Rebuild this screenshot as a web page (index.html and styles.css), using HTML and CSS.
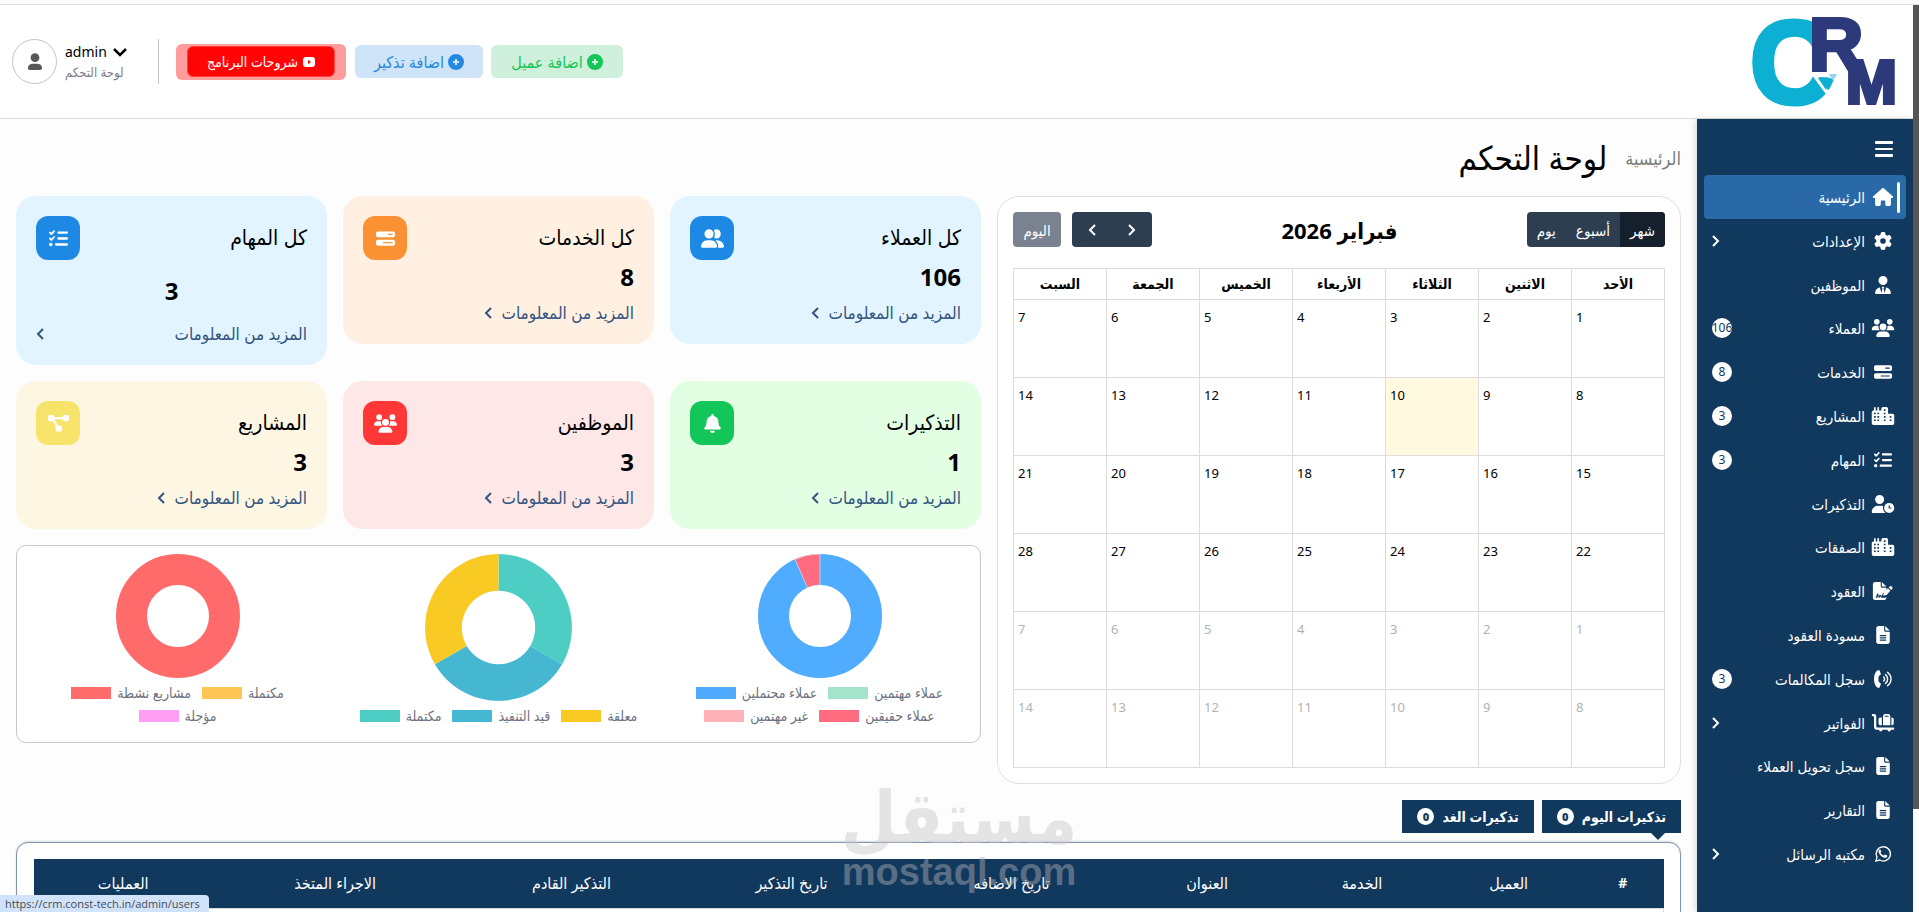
FILE: index.html
```html
<!DOCTYPE html>
<html lang="ar" dir="rtl">
<head>
<meta charset="utf-8">
<title>لوحة التحكم</title>
<link rel="stylesheet" href="styles.css">
</head>
<body>
<svg class="sprite" aria-hidden="true">
  <symbol id="house" viewBox="0 0 576 512"><path d="M575.8 255.5c0 18-15 32.1-32 32.1l-32 0 .7 160.2c0 2.7-.2 5.4-.5 8.1l0 16.2c0 22.1-17.9 40-40 40l-16 0-40 0-24 0c-22.1 0-40-17.9-40-40l0-88c0-17.700-14.300-32-32-32l-64 0c-17.700 0-32 14.300-32 32l0 88c0 22.100-17.900 40-40 40l-80 0c-22.100 0-40-17.900-40-40l0-184.500-32 0c-18 0-32-14-32-32.100c0-9 3-17 10-24L266.400 8c7-7 15-8 22-8s15 2 21 7L564.800 231.500c8 7 12 15 11 24z"/></symbol>
  <symbol id="gear" viewBox="0 0 512 512"><path d="M495.9 166.6c3.2 8.7 .5 18.4-6.4 24.6l-43.3 39.4c1.1 8.3 1.7 16.8 1.7 25.4s-.6 17.1-1.7 25.4l43.3 39.4c6.9 6.2 9.6 15.9 6.4 24.6c-4.4 11.9-9.7 23.3-15.8 34.3l-4.7 8.1c-6.6 11-14 21.4-22.1 31.2c-5.9 7.2-15.7 9.6-24.5 6.8l-55.7-17.7c-13.4 10.3-28.2 18.9-44 25.4l-12.5 57.1c-2 9.1-9 16.3-18.2 17.8c-13.8 2.3-28 3.5-42.5 3.5s-28.7-1.2-42.5-3.5c-9.2-1.5-16.2-8.7-18.2-17.8l-12.5-57.1c-15.8-6.5-30.6-15.1-44-25.4L83.1 425.9c-8.8 2.8-18.6 .3-24.5-6.8c-8.1-9.8-15.5-20.2-22.1-31.2l-4.7-8.1c-6.1-11-11.4-22.4-15.8-34.3c-3.2-8.7-.5-18.4 6.4-24.6l43.3-39.4C64.6 273.1 64 264.6 64 256s.6-17.1 1.7-25.4L22.400 191.2c-6.900-6.200-9.600-15.900-6.400-24.600c4.400-11.900 9.700-23.300 15.800-34.300l4.700-8.100c6.600-11 14-21.400 22.100-31.200c5.900-7.200 15.700-9.600 24.500-6.800l55.700 17.700c13.400-10.300 28.200-18.900 44-25.400l12.500-57.100c2-9.100 9-16.300 18.200-17.800C227.300 1.200 241.500 0 256 0s28.700 1.200 42.500 3.500c9.200 1.500 16.200 8.700 18.200 17.800l12.500 57.100c15.800 6.500 30.600 15.100 44 25.400l55.700-17.700c8.800-2.800 18.600-.3 24.500 6.800c8.100 9.800 15.500 20.200 22.100 31.200l4.700 8.100c6.100 11 11.400 22.400 15.800 34.300zM256 336a80 80 0 1 0 0-160 80 80 0 1 0 0 160z"/></symbol>
  <symbol id="user-tie" viewBox="0 0 448 512"><path d="M96 128a128 128 0 1 0 256 0A128 128 0 1 0 96 128zm94.500 200.200l18.600 31L175.800 483.100l-36-146.900c-2-8.100-9.800-13.400-17.900-11.300C51.900 342.400 0 405.800 0 481.300c0 17 13.800 30.700 30.700 30.700l386.600 0c17 0 30.700-13.800 30.700-30.700c0-75.500-51.900-138.900-121.900-156.400c-8.100-2-15.900 3.300-17.900 11.300l-36 146.900L238.900 359.200l18.600-31c6.400-10.700-1.300-24.200-13.700-24.200l-39.500 0c-12.400 0-20.100 13.600-13.700 24.200z"/></symbol>
  <symbol id="users" viewBox="0 0 640 512"><path d="M144 0a80 80 0 1 1 0 160A80 80 0 1 1 144 0zM512 0a80 80 0 1 1 0 160A80 80 0 1 1 512 0zM0 298.700C0 239.800 47.800 192 106.700 192l42.700 0c15.900 0 31 3.500 44.600 9.700c-1.300 7.200-1.900 14.700-1.900 22.300c0 38.200 16.800 72.500 43.300 96L21.300 320C9.600 320 0 310.400 0 298.700zM404.600 320c26.600-23.500 43.300-57.800 43.300-96c0-7.600-.7-15-1.900-22.300c13.600-6.300 28.700-9.700 44.600-9.700l42.700 0C592.200 192 640 239.800 640 298.700c0 11.800-9.600 21.300-21.300 21.300zM224 224a96 96 0 1 1 192 0 96 96 0 1 1 -192 0zM128 485.300C128 411.700 187.700 352 261.300 352l117.300 0C452.300 352 512 411.700 512 485.300c0 14.700-11.900 26.700-26.700 26.700l-330.700 0c-14.700 0-26.700-11.900-26.700-26.700z"/></symbol>
  <symbol id="bars-progress" viewBox="0 0 512 512"><path fill-rule="evenodd" d="M48 64h416a48 48 0 0 1 48 48v64a48 48 0 0 1-48 48H48a48 48 0 0 1-48-48v-64a48 48 0 0 1 48-48zM320 128v32h128v-32zM48 288h416a48 48 0 0 1 48 48v64a48 48 0 0 1-48 48H48a48 48 0 0 1-48-48v-64a48 48 0 0 1 48-48zM192 352v32h256v-32z"/></symbol>
  <symbol id="city" viewBox="0 0 640 512"><path fill-rule="evenodd" d="M64 24a24 24 0 0 1 48 0v72h48V24a24 24 0 0 1 48 0v72h64V48a48 48 0 0 1 48-48h96a48 48 0 0 1 48 48v144h128a48 48 0 0 1 48 48v224a48 48 0 0 1-48 48H48a48 48 0 0 1-48-48V144a48 48 0 0 1 48-48h16zM64 160v48h48v-48zM160 160v48h48v-48zM64 256v48h48v-48zM160 256v48h48v-48zM64 352v48h48v-48zM160 352v48h48v-48zM344 64v48h48V64zM344 160v48h48v-48zM344 256v48h48v-48zM344 352v48h48v-48zM512 256v48h48v-48zM512 352v48h48v-48z"/></symbol>
  <symbol id="list-check" viewBox="0 0 512 512"><path d="M152.100 38.200c9.900 8.900 10.700 24 1.800 33.900l-72 80c-4.400 4.900-10.600 7.800-17.200 7.900s-12.900-2.400-17.600-7L7 113C-2.300 103.600-2.300 88.400 7 79s24.600-9.400 33.900 0l22.100 22.100 55.100-61.200c8.900-9.900 24-10.700 33.900-1.800zm0 160c9.900 8.900 10.700 24 1.800 33.900l-72 80c-4.400 4.900-10.600 7.800-17.200 7.900s-12.900-2.400-17.600-7L7 273c-9.400-9.400-9.400-24.600 0-33.900s24.600-9.400 33.900 0l22.100 22.100 55.100-61.200c8.900-9.900 24-10.700 33.900-1.800zM224 96c0-17.700 14.300-32 32-32l224 0c17.700 0 32 14.300 32 32s-14.300 32-32 32l-224 0c-17.700 0-32-14.300-32-32zm0 160c0-17.700 14.300-32 32-32l224 0c17.700 0 32 14.300 32 32s-14.300 32-32 32l-224 0c-17.700 0-32-14.300-32-32zM160 416c0-17.700 14.300-32 32-32l288 0c17.700 0 32 14.300 32 32s-14.300 32-32 32l-288 0c-17.700 0-32-14.300-32-32zM48 368a48 48 0 1 1 0 96 48 48 0 1 1 0-96z"/></symbol>
  <symbol id="user-clock" viewBox="0 0 640 512"><path fill-rule="evenodd" d="M224 0a128 128 0 1 1 0 256A128 128 0 1 1 224 0zM178.300 304l91.400 0c20.600 0 40.400 3.500 58.800 9.900C323 331 320 349.100 320 368c0 59.500 29.500 112.100 74.800 144L29.700 512C13.300 512 0 498.700 0 482.300C0 383.800 79.800 304 178.300 304zM352 368a144 144 0 1 1 288 0 144 144 0 1 1 -288 0zm144-80c-8.800 0-16 7.200-16 16l0 64c0 8.800 7.200 16 16 16l48 0c8.800 0 16-7.200 16-16s-7.200-16-16-16l-32 0 0-48c0-8.800-7.200-16-16-16z"/></symbol>
  <symbol id="file-signature" viewBox="0 0 576 512"><path fill-rule="evenodd" d="M64 0h160v128a32 32 0 0 0 32 32h128v64L286 322c-8 8-13 17-16 28l-12 50c-12-3-23-9-28-21-9-20-36-21-46-1l-12 24-18-60c-5-19-33-19-39 0l-22 74H80v34h46l22-60 14 48c5 16 26 18 33 4l16-32c20 28 42 36 72 36h62c15 0 28-5 39-14v16a64 64 0 0 1-64 64H64a64 64 0 0 1-64-64V64A64 64 0 0 1 64 0z"/><path d="M256 0v128h128zM550 143l-15-15a40 40 0 0 0-56 0l-30 30 71 71 30-30a40 40 0 0 0 0-56zM311 296l-18 72c-3 13 7 22 19 19l72-18c6-1 11-4 15-8l98-110-71-71-107 101c-4 4-7 9-8 15z"/></symbol>
  <symbol id="file-lines" viewBox="0 0 384 512"><path fill-rule="evenodd" d="M64 0C28.700 0 0 28.700 0 64L0 448c0 35.300 28.700 64 64 64l256 0c35.300 0 64-28.700 64-64l0-288-128 0c-17.700 0-32-14.300-32-32L224 0 64 0zM256 0l0 128 128 0L256 0zM112 256h160a16 16 0 0 1 0 32H112a16 16 0 0 1 0-32zM112 320h160a16 16 0 0 1 0 32H112a16 16 0 0 1 0-32zM112 384h160a16 16 0 0 1 0 32H112a16 16 0 0 1 0-32z"/></symbol>
  <symbol id="phone-volume" viewBox="0 0 512 512"><path d="M72 28 118 4c18-7 36 2 43 19l30 78c6 16 1 32-12 42l-42 31c-14 52-14 112 0 164l42 31c13 10 18 26 12 42l-30 78c-7 17-25 26-43 19l-46-24C-24 372-24 140 72 28z"/><g fill="none" stroke="currentColor" stroke-width="40" stroke-linecap="round"><path d="M276 200c32 26 32 86 0 112M328 130c80 60 80 192 0 252M385 66c132 94 132 286 0 380"/></g></symbol>
  <symbol id="cart" viewBox="0 0 640 512"><path fill-rule="evenodd" d="M0 32A32 32 0 0 1 32 0h32a64 64 0 0 1 64 64v288a32 32 0 0 0 32 32h448a32 32 0 0 1 0 64h-64a48 48 0 1 1-96 0H304a48 48 0 1 1-96 0h-48a96 96 0 0 1-96-96V64H32A32 32 0 0 1 0 32zM320 64a64 64 0 0 1 64-64h80a64 64 0 0 1 64 64v256H320V64zm48 16h112V64a16 16 0 0 0-16-16h-80a16 16 0 0 0-16 16zM192 144a48 48 0 0 1 48-48h48v224h-48a48 48 0 0 1-48-48zM560 96h16a48 48 0 0 1 48 48v128a48 48 0 0 1-48 48h-16z"/></symbol>
  <symbol id="whatsapp" viewBox="0 0 448 512"><path fill="none" stroke="currentColor" stroke-width="38" d="M21 459l31-112A203 203 0 1 1 128 428z"/><path d="M155 145c-7-14-12-14-20-14-22 0-39 24-39 54 0 51 70 147 150 172 45 14 88 0 96-30 3-13 4-25 2-28-2-5-60-34-65-31-8 6-22 28-28 32-20 2-91-44-99-78 3-9 24-25 24-36 0-4-16-33-21-41z"/></symbol>
  <symbol id="bell" viewBox="0 0 448 512"><path d="M224 0c-17.700 0-32 14.300-32 32l0 19.200C119 66 64 130.600 64 208l0 18.800c0 47-17.300 92.400-48.500 127.600l-7.400 8.300c-8.400 9.400-10.400 22.900-5.300 34.400S19.400 416 32 416l384 0c12.600 0 24-7.400 29.200-18.900s3.100-25-5.300-34.400l-7.400-8.300C401.300 319.200 384 273.900 384 226.800l0-18.800c0-77.400-55-142-128-156.800L256 32c0-17.700-14.300-32-32-32zM160 448h128a64 64 0 0 1-128 0z"/></symbol>
  <symbol id="user-group" viewBox="0 0 640 512"><path d="M96 128a128 128 0 1 1 256 0A128 128 0 1 1 96 128zM0 482C0 384 80 304 178 304h92c98 0 178 80 178 178 0 17-13 30-30 30H30c-17 0-30-13-30-30zM610 512H472c5-9 8-20 8-32 0-72-32-130-80-167 14-6 28-9 40-9 110 0 200 82 200 178 0 17-14 30-30 30zM432 256c-28 0-48-8-72-28 38-56 38-136-4-196 22-22 46-32 76-32 68 0 118 56 118 128s-50 128-118 128z"/></symbol>
  <symbol id="diagram" viewBox="0 0 576 512"><g fill="none" stroke="currentColor" stroke-width="60"><path d="M96 110h380M128 128l150 250"/></g><rect y="30" width="176" height="164" rx="50"/><rect x="400" y="30" width="176" height="164" rx="50"/><rect x="210" y="310" width="176" height="164" rx="50"/></symbol>
  <symbol id="chevron" viewBox="0 0 8 12"><path d="M7 1 2 6l5 5" fill="none" stroke="currentColor" stroke-width="2"/></symbol>
  <symbol id="plus" viewBox="0 0 16 16"><path fill-rule="evenodd" d="M8 0a8 8 0 1 1 0 16A8 8 0 0 1 8 0zM7 5v2H5v2h2v2h2V9h2V7H9V5z"/></symbol>
</svg>

<header class="topbar">
  <a class="brand" href="#" aria-label="CRM">
    <svg class="brand-art" viewBox="0 0 150 100">
      <text class="brand-c" x="1" y="91">C</text>
      <path d="M64 0h40v66l-38-1-2-2z" fill="#fff"/>
      <path d="m64 61 19 26" stroke="#fff" stroke-width="4"/>
      <path d="m69 66 12 0-4 12z" fill="#0db0d2"/>
      <path d="m80 62 8 0-4 7z" fill="#8cd6f2"/>
      <text class="brand-r" x="60" y="58">R</text>
      <text class="brand-m" x="97" y="91">M</text>
    </svg>
  </a>
  <div class="top-tools">
    <a class="pill pill-green" href="#"><svg class="pill-icon"><use href="#plus"/></svg><span>اضافة عميل</span></a>
    <a class="pill pill-blue" href="#"><svg class="pill-icon"><use href="#plus"/></svg><span>اضافة تذكير</span></a>
    <a class="pill pill-red" href="#"><span class="pill-core"><svg class="video-icon" viewBox="0 0 12 10"><rect width="12" height="10" rx="3" fill="#fff"/><path d="m5 3 3 2-3 2z" fill="#f00"/></svg><span>شروحات البرنامج</span></span></a>
    <div class="account">
      <button class="account-name" type="button"><svg class="down" viewBox="0 0 14 10"><path d="m1 2 6 6 6-6" fill="none" stroke="currentColor" stroke-width="2.500"/></svg><span>admin</span></button>
      <span class="account-role">لوحة التحكم</span>
    </div>
    <span class="avatar"><svg viewBox="0 0 16 20"><circle cx="8" cy="5" r="5"/><path d="M2 19a2 2 0 0 1-2-2c0-4 3-5 6-5h4c3 0 6 1 6 5a2 2 0 0 1-2 2z"/></svg></span>
  </div>
</header>

<div class="shell">
  <nav class="sidebar">
    <button class="menu-toggle" type="button" aria-label="القائمة"><i></i><i></i><i></i></button>
    <ul class="menu">
      <li><a class="active" href="#"><svg><use href="#house"/></svg><span>الرئيسية</span></a></li>
      <li><a href="#"><svg><use href="#gear"/></svg><span>الإعدادات</span><svg class="more"><use href="#chevron"/></svg></a></li>
      <li><a href="#"><svg><use href="#user-tie"/></svg><span>الموظفين</span></a></li>
      <li><a href="#"><svg><use href="#users"/></svg><span>العملاء</span><b class="badge">106</b></a></li>
      <li><a href="#"><svg><use href="#bars-progress"/></svg><span>الخدمات</span><b class="badge">8</b></a></li>
      <li><a href="#"><svg><use href="#city"/></svg><span>المشاريع</span><b class="badge">3</b></a></li>
      <li><a href="#"><svg><use href="#list-check"/></svg><span>المهام</span><b class="badge">3</b></a></li>
      <li><a href="#"><svg><use href="#user-clock"/></svg><span>التذكيرات</span></a></li>
      <li><a href="#"><svg><use href="#city"/></svg><span>الصفقات</span></a></li>
      <li><a href="#"><svg><use href="#file-signature"/></svg><span>العقود</span></a></li>
      <li><a href="#"><svg><use href="#file-lines"/></svg><span>مسودة العقود</span></a></li>
      <li><a href="#"><svg><use href="#phone-volume"/></svg><span>سجل المكالمات</span><b class="badge">3</b></a></li>
      <li><a href="#"><svg><use href="#cart"/></svg><span>الفواتير</span><svg class="more"><use href="#chevron"/></svg></a></li>
      <li><a href="#"><svg><use href="#file-lines"/></svg><span>سجل تحويل العملاء</span></a></li>
      <li><a href="#"><svg><use href="#file-lines"/></svg><span>التقارير</span></a></li>
      <li><a href="#"><svg><use href="#whatsapp"/></svg><span>مكتبه الرسائل</span><svg class="more"><use href="#chevron"/></svg></a></li>
    </ul>
  </nav>

  <main class="content">
    <div class="page-head"><a href="#">الرئيسية</a><h1>لوحة التحكم</h1></div>

    <div class="dash">
      <section class="calendar">
        <div class="cal-bar">
          <div class="group"><button class="on" type="button">شهر</button><button type="button">أسبوع</button><button type="button">يوم</button></div>
          <h2>فبراير 2026</h2>
          <div class="cal-nav">
            <div class="group arrows"><button type="button" aria-label="السابق"><svg class="flip"><use href="#chevron"/></svg></button><button type="button" aria-label="التالي"><svg><use href="#chevron"/></svg></button></div>
            <button class="today-btn" type="button">اليوم</button>
          </div>
        </div>
        <table class="month">
          <thead><tr><th>الأحد</th><th>الاثنين</th><th>الثلاثاء</th><th>الأربعاء</th><th>الخميس</th><th>الجمعة</th><th>السبت</th></tr></thead>
          <tbody>
            <tr><td>1</td><td>2</td><td>3</td><td>4</td><td>5</td><td>6</td><td>7</td></tr>
            <tr><td>8</td><td>9</td><td class="today">10</td><td>11</td><td>12</td><td>13</td><td>14</td></tr>
            <tr><td>15</td><td>16</td><td>17</td><td>18</td><td>19</td><td>20</td><td>21</td></tr>
            <tr><td>22</td><td>23</td><td>24</td><td>25</td><td>26</td><td>27</td><td>28</td></tr>
            <tr class="other"><td>1</td><td>2</td><td>3</td><td>4</td><td>5</td><td>6</td><td>7</td></tr>
            <tr class="other"><td>8</td><td>9</td><td>10</td><td>11</td><td>12</td><td>13</td><td>14</td></tr>
          </tbody>
        </table>
      </section>

      <div class="overview">
        <div class="cards">
          <article class="card sky"><div class="card-top"><h3>كل العملاء</h3><span class="tile blue"><svg><use href="#user-group"/></svg></span></div><strong>106</strong><a href="#">المزيد من المعلومات<svg><use href="#chevron"/></svg></a></article>
          <article class="card peach"><div class="card-top"><h3>كل الخدمات</h3><span class="tile orange"><svg><use href="#bars-progress"/></svg></span></div><strong>8</strong><a href="#">المزيد من المعلومات<svg><use href="#chevron"/></svg></a></article>
          <article class="card sky spread"><div class="card-top"><h3>كل المهام</h3><span class="tile blue"><svg><use href="#list-check"/></svg></span></div><strong>3</strong><a href="#">المزيد من المعلومات<svg><use href="#chevron"/></svg></a></article>
          <article class="card mint"><div class="card-top"><h3>التذكيرات</h3><span class="tile green"><svg><use href="#bell"/></svg></span></div><strong>1</strong><a href="#">المزيد من المعلومات<svg><use href="#chevron"/></svg></a></article>
          <article class="card rose"><div class="card-top"><h3>الموظفين</h3><span class="tile red"><svg><use href="#users"/></svg></span></div><strong>3</strong><a href="#">المزيد من المعلومات<svg><use href="#chevron"/></svg></a></article>
          <article class="card cream"><div class="card-top"><h3>المشاريع</h3><span class="tile yellow"><svg><use href="#diagram"/></svg></span></div><strong>3</strong><a href="#">المزيد من المعلومات<svg><use href="#chevron"/></svg></a></article>
        </div>

        <section class="charts">
          <figure>
            <svg class="donut" viewBox="0 0 124 124"><circle class="ring c-blue" cx="62" cy="62" r="46.500"/><path d="M62 0A62 62 0 0 0 37 5.300L49.500 33.700A31 31 0 0 1 62 31z" fill="#ff6b7f" stroke="#fff" stroke-width=".5"/></svg>
            <figcaption dir="ltr">
              <div class="keys"><span class="key"><i class="c-blue"></i>عملاء محتملين</span><span class="key"><i class="c-mint"></i>عملاء مهتمين</span></div>
              <div class="keys"><span class="key"><i class="c-pink"></i>غير مهتمين</span><span class="key"><i class="c-rose"></i>عملاء حقيقين</span></div>
            </figcaption>
          </figure>
          <figure>
            <svg class="donut large" viewBox="-74 -74 148 148"><g><path d="M0-74A74 74 0 0 1 64 37L32 18.500A37 37 0 0 0 0-37z" fill="#4ecdc4"/><path d="M64 37A74 74 0 0 1-64 37L-32 18.500A37 37 0 0 0 32 18.500z" fill="#45b7d1"/><path d="M-64 37A74 74 0 0 1 0-74V-37A37 37 0 0 0-32 18.500z" fill="#f9ca24"/></g></svg>
            <figcaption dir="ltr">
              <div class="keys"><span class="key"><i class="c-teal"></i>مكتملة</span><span class="key"><i class="c-cyan"></i>قيد التنفيذ</span><span class="key"><i class="c-yellow"></i>معلقة</span></div>
            </figcaption>
          </figure>
          <figure>
            <svg class="donut" viewBox="0 0 124 124"><circle class="ring c-red" cx="62" cy="62" r="46.500"/></svg>
            <figcaption dir="ltr">
              <div class="keys"><span class="key"><i class="c-red"></i>مشاريع نشطة</span><span class="key"><i class="c-amber"></i>مكتملة</span></div>
              <div class="keys"><span class="key"><i class="c-violet"></i>مؤجلة</span></div>
            </figcaption>
          </figure>
        </section>
      </div>
    </div>

    <div class="tabs"><button class="tab current" type="button">تذكيرات اليوم<b>0</b></button><button class="tab" type="button">تذكيرات الغد<b>0</b></button></div>
    <section class="reminders">
      <table>
        <colgroup><col class="w-num"><col class="w-s"><col class="w-s"><col class="w-m"><col class="w-xl"><col class="w-l"><col class="w-xl"><col class="w-xxl"><col class="w-op"></colgroup>
        <thead><tr><th class="num">#</th><th>العميل</th><th>الخدمة</th><th>العنوان</th><th>تاريخ الاضافه</th><th>تاريخ التذكير</th><th>التذكير القادم</th><th>الاجراء المتخذ</th><th>العمليات</th></tr></thead>
        <tbody><tr><td colspan="9"></td></tr></tbody>
      </table>
    </section>
  </main>
</div>

<div class="watermark"><span class="wm-ar">مستقل</span><span class="wm-en">mostaql.com</span></div>
<div class="link-hint" dir="ltr">https://crm.const-tech.in/admin/users</div>
<div class="scroll-thumb"></div>
</body>
</html>
```
FILE: styles.css
```css
* { box-sizing: border-box; }
body {
  margin: 0;
  height: 100vh;
  overflow: hidden;
  display: flex;
  flex-direction: column;
  background: #fdfdfd;
  color: #000;
  font-family: "Noto Sans", "DejaVu Sans Condensed", "DejaVu Sans", sans-serif;
  font-size: 15px;
  line-height: 20px;
}
a { color: inherit; text-decoration: none; }
button { font: inherit; color: inherit; border: 0; padding: 0; background: none; cursor: pointer; }
h1, h2, h3, ul, figure { margin: 0; padding: 0; font-weight: 400; }
ul { list-style: none; }
svg { fill: currentColor; flex: none; }
.sprite { display: none; }

.topbar {
  flex: none;
  height: 115px;
  margin-top: 4px;
  padding: 0 20px 0 12px;
  border-top: 1px solid #dedede;
  border-bottom: 1px solid #dedede;
  background: #fff;
  display: flex;
  align-items: center;
  justify-content: space-between;
}
.brand { display: flex; }
.brand-art { width: 150px; height: 100px; overflow: visible; }
.brand-art text { font-family: "Liberation Sans", sans-serif; font-weight: 700; direction: ltr; }
.brand-c { font-size: 116px; fill: #0db0d2; stroke: #0db0d2; stroke-width: 5px; }
.brand-r, .brand-m { fill: #2c3a7c; stroke: #2c3a7c; stroke-width: 4px; }
.brand-r { font-size: 75px; }
.brand-m { font-size: 61px; }
.top-tools { display: flex; align-items: center; }
.pill { display: flex; align-items: center; justify-content: center; gap: 4px; height: 33px; border-radius: 6px; margin-inline-end: 8px; font-size: 16px; }
.pill-icon { width: 16px; height: 16px; }
.pill-green { width: 132px; background: #cff0dd; color: #13c656; }
.pill-blue { width: 128px; background: #cfe4f9; color: #2589e0; margin-inline-end: 9px; }
.pill-red { width: 170px; height: 36px; padding: 2px 11px; background: #ff9c9c; margin-inline-end: 17px; }
.pill-core { flex: 1; height: 31px; border: 1px solid #ff4040; border-radius: 6px; background: #ff0505; color: #fff; font-size: 14px; display: flex; align-items: center; justify-content: center; gap: 5px; }
.video-icon { width: 12px; height: 10px; }
.account { width: 102px; height: 45px; padding-left: 8px; border-right: 1px solid #c4c4c4; display: flex; flex-direction: column; align-items: flex-end; justify-content: center; }
.account-name { display: flex; align-items: center; gap: 6px; font-size: 14px; }
.down { width: 14px; height: 10px; }
.account-role { color: #7b8087; font-size: 13px; line-height: 20px; }
.avatar { width: 45px; height: 45px; border: 1px solid #c4c4c4; border-radius: 50%; display: flex; align-items: center; justify-content: center; color: #585858; }
.avatar svg { width: 14px; height: 18px; }

.shell { flex: 1; min-height: 0; display: flex; margin-left: 16px; margin-right: 6px; }
.sidebar { flex: none; width: 216px; padding: 22px 7px 36px; background: #11385d; color: #fff; display: flex; flex-direction: column; box-shadow: -2px 0 6px #0002; }
.menu-toggle { display: flex; flex-direction: column; gap: 4px; margin: 0 13px 18px; width: 18px; height: 16px; }
.menu-toggle i { width: 18px; height: 3px; border-radius: 1px; background: #fff; }
.menu { flex: 1; display: flex; flex-direction: column; }
.menu li { flex: 1; min-height: 0; display: flex; }
.menu a { flex: 1; display: flex; align-items: center; gap: 6px; padding: 0 11px 0 8px; border-radius: 4px; position: relative; font-size: 15px; }
.menu a > svg { width: 24px; height: 18px; }
.menu .active { background: #2a69a7; }
.active::before { content: ""; position: absolute; right: 6px; top: 7px; bottom: 6px; width: 3px; border-radius: 2px; background: #fff; }
.menu a > .more { width: 8px; height: 12px; margin-inline-start: auto; transform: scaleX(-1); }
.badge { margin-inline-start: auto; width: 20px; height: 20px; border-radius: 50%; overflow: hidden; background: #fff; color: #11385d; font-size: 12px; font-weight: 400; line-height: 20px; display: flex; justify-content: center; }

.content { flex: 1; min-width: 0; display: flex; flex-direction: column; padding-right: 16px; }
.page-head { height: 77px; display: flex; align-items: center; gap: 18px; flex: none; }
.page-head a { color: #7c7c7c; font-size: 18px; }
.page-head h1 { font-size: 33px; line-height: 40px; }
.dash { display: grid; grid-template-columns: 684fr 965fr; gap: 16px; align-items: start; flex: none; }

.calendar { border: 1px solid #dfdfdf; border-radius: 22px; background: #fff; padding: 15px; height: 588px; }
.cal-bar { display: flex; justify-content: space-between; align-items: center; margin-bottom: 21px; height: 35px; }
.cal-bar h2 { font-size: 22px; font-weight: 700; }
.cal-bar button { height: 35px; padding: 0 10px; color: #fff; font-size: 15px; }
.group { display: flex; border-radius: 4px; overflow: hidden; background: #2c3e50; }
.group .on { background: #16202c; }
.cal-nav { display: flex; gap: 11px; }
.cal-bar .arrows button { width: 40px; display: flex; align-items: center; justify-content: center; }
.arrows svg { width: 8px; height: 12px; }
.flip { transform: scaleX(-1); }
.cal-bar .today-btn { width: 48px; padding: 0; border-radius: 4px; background: #7a8290; }
.month { width: 100%; border-collapse: collapse; table-layout: fixed; }
.month th, .month td { border: 1px solid #dcdcdc; }
.month th { height: 31px; padding: 0; font-size: 14px; }
.month td { height: 78px; padding: 7px 4px; vertical-align: top; text-align: left; font-size: 13px; }
.month .today { background: #fffadf; }
.other td { color: #b2b2b2; }

.overview { display: flex; flex-direction: column; gap: 16px; }
.cards { display: grid; grid-template-columns: repeat(3, 1fr); gap: 16px; align-items: start; }
.card { border-radius: 20px; padding: 20px 20px 12px; display: flex; flex-direction: column; align-items: flex-start; }
.card-top { align-self: stretch; display: flex; justify-content: space-between; height: 44px; }
.card h3 { font-size: 21px; line-height: 42px; }
.card strong { font-size: 24px; line-height: 34px; }
.card a { display: flex; align-items: center; gap: 10px; color: #33557f; font-size: 17px; line-height: 38px; }
.card a svg { width: 8px; height: 12px; }
.spread strong { align-self: center; padding-top: 14px; }
.spread a { align-self: stretch; justify-content: space-between; padding-top: 7px; }
.tile { width: 44px; height: 44px; border-radius: 12px; color: #fff; display: flex; align-items: center; justify-content: center; }
.tile svg { width: 23px; height: 19px; }
.sky { background: #e2f4ff; } .peach { background: #fff0e1; } .mint { background: #e2ffe4; }
.rose { background: #fde7e7; } .cream { background: #fdf6e3; }
.blue { background: #1e88e5; } .orange { background: #fa9234; } .green { background: #13c65a; }
.red { background: #ff3737; } .yellow { background: #f8e36a; }

.charts { height: 198px; border: 1px solid #c6c6c6; border-radius: 10px; background: #fff; padding-top: 8px; display: grid; grid-template-columns: repeat(3, 1fr); }
.charts figure { display: flex; flex-direction: column; align-items: center; }
.donut { width: 124px; height: 124px; }
.donut.large { width: 147px; height: 147px; }
.ring { stroke-width: 31px; fill: none; }
.ring.c-blue { stroke: #4facfe; } .ring.c-red { stroke: #ff6b6b; }
figcaption { padding-top: 3px; }
.keys { display: flex; justify-content: center; gap: 11px; height: 23px; align-items: center; }
.key { display: flex; align-items: center; gap: 6px; color: #6c7280; font-size: 14px; line-height: 20px; white-space: nowrap; }
.key i { width: 40px; height: 12px; }
i.c-blue { background: #50abff; } i.c-mint { background: #a3e4cb; } i.c-pink { background: #ffb3b8; }
i.c-rose { background: #ff6b7f; } i.c-teal { background: #4ecdc4; } i.c-cyan { background: #45b7d1; }
i.c-yellow { background: #f9ca24; } i.c-red { background: #ff6b6b; } i.c-amber { background: #fec555; }
i.c-violet { background: #ff9ff3; }

.tabs { display: flex; gap: 8px; padding: 16px 0 9px; flex: none; }
.tab { position: relative; height: 33px; padding: 0 15px; display: flex; align-items: center; gap: 8px; background: #11385d; color: #fff; font-size: 14px; font-weight: 700; }
.tab b { width: 17px; height: 17px; border-radius: 50%; background: #fff; color: #11385d; font-size: 11px; line-height: 17px; }
.current::after { content: ""; position: absolute; right: 16px; top: 33px; border: 7px solid transparent; border-top-color: #11385d; border-bottom: 0; }
.reminders { flex: none; height: 220px; border: 1px solid #8193ad; border-radius: 12px; background: #fff; padding: 16px; box-shadow: 0 -1px 2px #0002; }
.reminders table { width: 100%; border-collapse: collapse; table-layout: fixed; }
.reminders th { height: 49px; padding: 0; background: #11385d; color: #fff; font-weight: 400; font-size: 16px; }
.reminders .num { font-size: 14px; font-weight: 700; }
.reminders td { height: 40px; border: 1px solid #dcdcdc; }
.w-num { width: 5%; } .w-s { width: 9%; } .w-m { width: 10%; } .w-l { width: 13%; } .w-xl { width: 14%; } .w-xxl { width: 15%; } .w-op { width: 11%; }

.watermark { position: absolute; left: 844px; top: 778px; width: 230px; color: #b0b0b6; opacity: .45; display: flex; flex-direction: column; align-items: center; direction: ltr; font-weight: 700; pointer-events: none; }
.wm-ar { font-size: 72px; line-height: 74px; color: #c8c8c8; }
.wm-en { font-family: "Liberation Sans", sans-serif; font-size: 38px; line-height: 40px; }
.link-hint { position: absolute; left: 0; bottom: 0; padding: 0 9px 0 5px; height: 17px; border-radius: 0 4px 0 0; background: #d0e3fb; color: #474b52; font: 11px/17px "Open Sans", sans-serif; }
.scroll-thumb { position: absolute; right: 0; top: 5px; width: 6px; height: 804px; background: #555; }
```
